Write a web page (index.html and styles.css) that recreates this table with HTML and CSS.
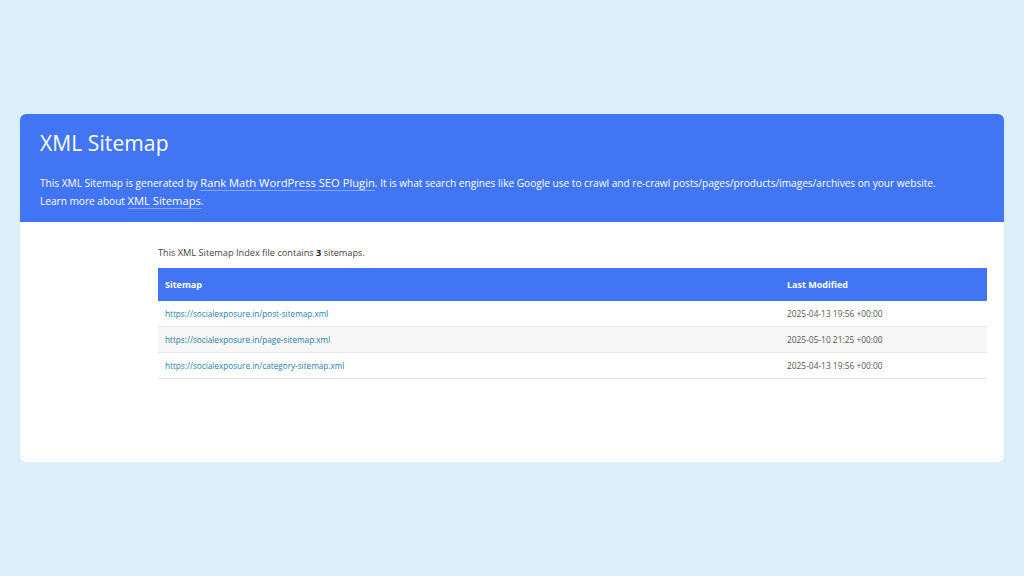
FILE: index.html
```html
<!DOCTYPE html>
<html>
<head>
<meta charset="utf-8">
<title>XML Sitemap</title>
<link rel="stylesheet" href="styles.css">
</head>
<body>
<div class="card">
  <div class="header">
    <h1>XML Sitemap</h1>
    <p>This XML Sitemap is generated by <a href="#">Rank Math WordPress SEO Plugin</a>. It is what search engines like Google use to crawl and re-crawl posts/pages/products/images/archives on your website.</p>
    <p>Learn more about <a href="#">XML Sitemaps</a>.</p>
  </div>
  <div class="content">
    <p class="intro">This XML Sitemap Index file contains <strong>3</strong> sitemaps.</p>
    <table>
      <thead>
        <tr><th class="c1">Sitemap</th><th class="c2">Last Modified</th></tr>
      </thead>
      <tbody>
        <tr><td><a href="#">https://socialexposure.in/post-sitemap.xml</a></td><td>2025-04-13 19:56 +00:00</td></tr>
        <tr class="alt"><td><a href="#">https://socialexposure.in/page-sitemap.xml</a></td><td>2025-05-10 21:25 +00:00</td></tr>
        <tr><td><a href="#">https://socialexposure.in/category-sitemap.xml</a></td><td>2025-04-13 19:56 +00:00</td></tr>
      </tbody>
    </table>
  </div>
</div>
</body>
</html>
```
FILE: styles.css
```css
html, body {
  margin: 0;
  padding: 0;
}
body {
  background: #dbf0f8;
  font-family: "Open Sans", "Noto Sans", sans-serif;
  color: #444;
  padding: 114px 20px 0;
}
.card {
  background: #fff;
  border-radius: 6px;
  overflow: hidden;
  height: 348px;
  box-shadow: 0 1px 3px rgba(0,0,0,0.04);
}
.header {
  background: #4275f4;
  color: #fff;
  padding: 16px 20px 11px;
  height: 81px;
}
.header h1 {
  margin: 0 0 18px;
  font-size: 21px;
  font-weight: 400;
  line-height: 26px;
  letter-spacing: 0.1px;
}
.header p {
  margin: 0;
  font-size: 10.1px;
  line-height: 18px;
}
.header a {
  color: #fff;
  text-decoration: none;
  font-size: 11.2px;
  border-bottom: 1px solid rgba(255,255,255,0.35);
}
.content {
  padding: 23px 17px 0 138px;
}
.intro {
  margin: 0 0 7px;
  font-size: 9.2px;
  line-height: 16px;
  color: #444;
}
.intro strong {
  color: #222;
}
table {
  width: 100%;
  border-collapse: collapse;
  font-size: 8.2px;
}
th {
  background: #4275f4;
  color: #fff;
  text-align: left;
  font-weight: 700;
  height: 33px;
  padding: 0 7px;
  font-size: 9px;
}
th.c2 {
  width: 193px;
}
td {
  height: 25px;
  padding: 0 7px;
  border-bottom: 1px solid #e6e6e6;
  color: #555;
}
td + td {
  font-size: 8.4px;
}
tr.alt td {
  background: #f6f6f6;
}
td a {
  color: #1f7fa6;
  text-decoration: none;
}
```
